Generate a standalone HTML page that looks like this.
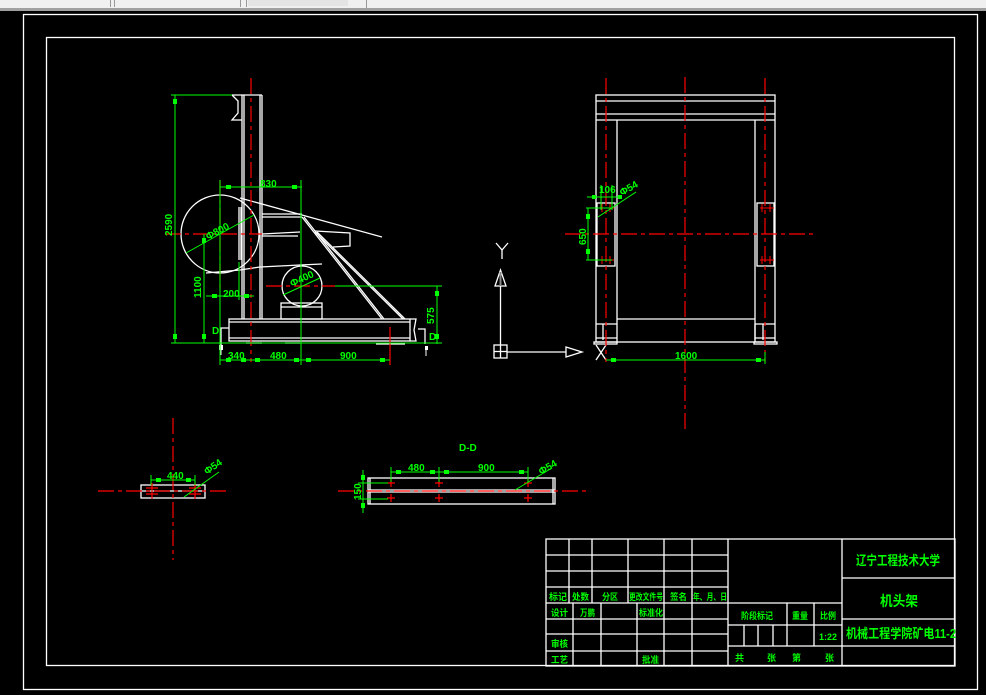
<!DOCTYPE html>
<html><head><meta charset="utf-8"><style>
html,body{margin:0;padding:0;background:#000;width:986px;height:695px;overflow:hidden}
svg{display:block}
.w{stroke:#fff;fill:none;stroke-width:1.3}
.g{stroke:#00ff00;fill:none;stroke-width:1}
.r{stroke:#ff0000;fill:none;stroke-width:1.2;stroke-dasharray:16 4 4 4}
.t{fill:#00ff00;font-family:"Liberation Sans",sans-serif;font-size:10px;font-weight:bold}
.c{fill:#00ff00;font-family:"Liberation Sans","Noto Sans CJK SC",sans-serif;font-weight:bold}
</style></head><body>
<svg width="986" height="695" viewBox="0 0 986 695" xmlns="http://www.w3.org/2000/svg">
<rect x="0" y="0" width="986" height="695" fill="#000"/>
<rect x="0" y="0" width="986" height="8" fill="#f0f0f0"/>
<rect x="0" y="8" width="986" height="3" fill="#a0a0a0"/>
<rect x="110" y="0" width="1" height="7" fill="#999"/><rect x="114" y="0" width="1" height="7" fill="#999"/>
<rect x="240" y="0" width="1" height="7" fill="#999"/><rect x="246" y="0" width="1" height="7" fill="#999"/>
<rect x="248" y="0" width="100" height="6" fill="#e4e4e4"/>
<rect x="366" y="0" width="1" height="8" fill="#999"/>
<rect x="23.5" y="14.5" width="954" height="675" class="w"/>
<rect x="46.5" y="37.5" width="908" height="628" class="w"/>

<g class="w">
<line x1="242" y1="95" x2="242" y2="319"/><line x1="244" y1="95" x2="244" y2="319"/>
<line x1="260" y1="95" x2="260" y2="319"/><line x1="262" y1="95" x2="262" y2="319"/>
<line x1="232" y1="95" x2="262" y2="95"/>
<polyline points="232,95 238,101 238,113 232,120 242,120"/>
<circle cx="220" cy="234" r="39"/>
<circle cx="302" cy="286" r="20"/>
<rect x="229" y="319" width="181" height="22"/>
<line x1="229" y1="322" x2="410" y2="322"/>
<line x1="229" y1="338" x2="410" y2="338"/>
<polyline points="410,319 416,319 414,330 416,341 410,341"/>
<rect x="281" y="303" width="41" height="16"/>
<line x1="281" y1="307" x2="322" y2="307"/>
<line x1="302" y1="217" x2="382" y2="319"/><line x1="304" y1="217" x2="384" y2="319"/>
<line x1="315" y1="232" x2="403" y2="319"/><line x1="317" y1="232" x2="405" y2="319"/>
<line x1="240" y1="198" x2="382" y2="237"/>
<line x1="262" y1="217" x2="302" y2="217"/><line x1="262" y1="214" x2="302" y2="214"/>
<line x1="262" y1="236" x2="298" y2="236"/><line x1="262" y1="234" x2="300" y2="232"/>
<polyline points="315,231 350,233 350,246 333,247"/>
<polyline points="206,273 240,270 260,267 300,265 322,264"/>
<line x1="239" y1="207" x2="239" y2="260"/><line x1="241" y1="207" x2="241" y2="260"/>
<polyline points="229,328 221,328 221,347"/>
<polyline points="418,329 425,329 425,344"/>
<line x1="246" y1="343" x2="262" y2="343"/><line x1="285" y1="343" x2="300" y2="343"/><line x1="376" y1="344" x2="405" y2="344"/>
</g>
<rect x="219" y="345" width="4" height="5" fill="#fff"/>
<line x1="221" y1="350" x2="221" y2="355" stroke="#fff"/>
<rect x="425" y="346" width="3" height="4" fill="#fff"/>
<line x1="426" y1="350" x2="426" y2="356" stroke="#fff"/>
<line x1="251" y1="78" x2="251" y2="362" class="r"/>
<line x1="165" y1="234" x2="262" y2="234" class="r"/>
<line x1="220" y1="180" x2="220" y2="290" class="r"/>
<line x1="266" y1="286" x2="335" y2="286" class="r"/>
<line x1="390" y1="327" x2="390" y2="365" class="r" style="stroke-dasharray:none"/>
<g class="g">
<line x1="175" y1="95" x2="175" y2="343"/>
<line x1="171" y1="95" x2="232" y2="95"/>
<line x1="171" y1="343" x2="442" y2="343"/>
<line x1="220" y1="187" x2="302" y2="187"/>
<line x1="220" y1="180" x2="220" y2="365"/>
<line x1="301" y1="180" x2="301" y2="365"/>
<line x1="204" y1="234" x2="204" y2="343"/>
<line x1="206" y1="296" x2="254" y2="296"/>
<line x1="239" y1="262" x2="239" y2="300"/>
<line x1="437" y1="286" x2="437" y2="344"/>
<line x1="335" y1="286" x2="442" y2="286"/>
<line x1="220" y1="360" x2="390" y2="360"/>
<line x1="186" y1="253" x2="254" y2="215"/>
<line x1="283" y1="295" x2="320" y2="278"/>
</g>
<g fill="#00ff00">
<rect x="173" y="99" width="4" height="5"/><rect x="173" y="334" width="4" height="5"/>
<rect x="226" y="185" width="5" height="4"/><rect x="292" y="185" width="5" height="4"/>
<rect x="202" y="238" width="4" height="5"/><rect x="202" y="334" width="4" height="5"/>
<rect x="212" y="294" width="5" height="4"/><rect x="244" y="294" width="5" height="4"/>
<rect x="435" y="291" width="4" height="5"/><rect x="435" y="334" width="4" height="5"/>
<rect x="226" y="358" width="5" height="4"/><rect x="241" y="358" width="5" height="4"/><rect x="255" y="358" width="5" height="4"/><rect x="294" y="358" width="5" height="4"/><rect x="306" y="358" width="5" height="4"/><rect x="380" y="358" width="5" height="4"/>
</g>
<text class="t" x="260" y="187">830</text>
<text class="t" x="223" y="297">200</text>
<text class="t" x="228" y="359">340</text>
<text class="t" x="270" y="359">480</text>
<text class="t" x="340" y="359">900</text>
<text class="t" transform="translate(172,236) rotate(-90)">2590</text>
<text class="t" transform="translate(201,298) rotate(-90)">1100</text>
<text class="t" transform="translate(434,324) rotate(-90)">575</text>
<text class="t" transform="translate(208,240) rotate(-28)">Φ800</text>
<text class="t" transform="translate(292,287) rotate(-25)">Φ400</text>
<text class="t" x="212" y="334">D</text>
<text class="t" x="429" y="340">D</text>

<g class="w" stroke-width="1">
<rect x="494" y="345" width="13" height="13"/>
<line x1="500.5" y1="345" x2="500.5" y2="358"/><line x1="494" y1="351.5" x2="507" y2="351.5"/>
<line x1="500.5" y1="345" x2="500.5" y2="286"/>
<polygon points="500.5,270 495,286 506,286"/>
<line x1="507" y1="352" x2="566" y2="352"/>
<polygon points="582,352 566,347 566,357"/>
<polyline points="496,243 502,250 508,243"/><line x1="502" y1="250" x2="502" y2="259"/>
<line x1="596" y1="345" x2="606" y2="360"/><line x1="606" y1="345" x2="596" y2="360"/>
</g>
<line x1="500.5" y1="272" x2="500.5" y2="286" stroke="#888" stroke-width="2"/>

<g class="w">
<rect x="596" y="95" width="179" height="247"/>
<line x1="596" y1="101" x2="775" y2="101"/>
<line x1="596" y1="114" x2="775" y2="114"/>
<line x1="596" y1="120" x2="775" y2="120"/>
<line x1="617" y1="120" x2="617" y2="342"/>
<line x1="755" y1="120" x2="755" y2="342"/>
<line x1="617" y1="319" x2="755" y2="319"/>
<rect x="597" y="203" width="18" height="63"/>
<rect x="757" y="203" width="17" height="63"/>
<line x1="596" y1="324" x2="617" y2="324"/><line x1="755" y1="324" x2="775" y2="324"/>
<line x1="603" y1="324" x2="603" y2="340"/><line x1="755" y1="324" x2="755" y2="340"/><line x1="763" y1="324" x2="763" y2="340"/>
<line x1="596" y1="338" x2="617" y2="338"/><line x1="755" y1="338" x2="775" y2="338"/>
<rect x="594" y="342" width="23" height="2"/><rect x="754" y="342" width="23" height="2"/>
</g>
<line x1="606" y1="78" x2="606" y2="362" class="r"/>
<line x1="765" y1="78" x2="765" y2="362" class="r"/>
<line x1="685" y1="77" x2="685" y2="432" class="r"/>
<line x1="565" y1="234" x2="816" y2="234" class="r"/>
<g stroke="#ff0000" stroke-width="1">
<path d="M600 208h8M602 204v8M606 208h8M610 204v8M600 260h8M602 256v8M606 260h8M610 256v8M760 208h8M762 204v8M766 208h8M770 204v8M760 260h8M762 256v8M766 260h8M770 256v8"/>
</g>
<g class="g">
<line x1="606" y1="360" x2="765" y2="360"/>
<line x1="765" y1="352" x2="765" y2="364"/>
<line x1="586" y1="208" x2="612" y2="208"/><line x1="586" y1="260" x2="612" y2="260"/>
<line x1="588" y1="208" x2="588" y2="260"/>
<line x1="587" y1="197" x2="620" y2="197"/>
<line x1="601" y1="185" x2="601" y2="210"/><line x1="612" y1="185" x2="612" y2="210"/>
<line x1="598" y1="217" x2="636" y2="192"/>
</g>
<g fill="#00ff00"><rect x="611" y="358" width="5" height="4"/><rect x="756" y="358" width="5" height="4"/><rect x="586" y="214" width="4" height="5"/><rect x="586" y="249" width="4" height="5"/><rect x="592" y="195" width="4" height="4"/><rect x="618" y="195" width="4" height="4"/></g>
<text class="t" x="675" y="359">1600</text>
<text class="t" x="599" y="193">106</text>
<text class="t" transform="translate(586,245) rotate(-90)">650</text>
<text class="t" transform="translate(622,196) rotate(-30)">Φ54</text>

<g class="w">
<rect x="141" y="485" width="64" height="13"/>
<line x1="141" y1="491" x2="205" y2="491"/>
<rect x="368" y="478" width="187" height="26"/>
<line x1="370" y1="478" x2="370" y2="504"/><line x1="553" y1="478" x2="553" y2="504"/>
<line x1="368" y1="490" x2="555" y2="490"/><line x1="368" y1="492" x2="555" y2="492"/>
</g>
<line x1="98" y1="491" x2="226" y2="491" class="r"/>
<line x1="173" y1="418" x2="173" y2="560" class="r"/>
<line x1="338" y1="491" x2="590" y2="491" class="r"/>
<g stroke="#ff0000" stroke-width="1.2">
<path d="M146 488h12M152 483v10M146 494h12M152 489v10M189 488h12M195 483v10M189 494h12M195 489v10"/>
<path d="M387 483h8M391 479v8M387 498h8M391 494v8M435 483h8M439 479v8M435 498h8M439 494v8M524 483h8M528 479v8M524 498h8M528 494v8"/>
</g>
<g class="g">
<line x1="151" y1="480" x2="195" y2="480"/><line x1="151" y1="475" x2="151" y2="485"/><line x1="195" y1="475" x2="195" y2="485"/>
<line x1="184" y1="497" x2="219" y2="472"/>
<line x1="391" y1="472" x2="528" y2="472"/>
<line x1="391" y1="467" x2="391" y2="482"/><line x1="439" y1="467" x2="439" y2="482"/><line x1="528" y1="467" x2="528" y2="482"/>
<line x1="515" y1="490" x2="552" y2="468"/>
<line x1="363" y1="470" x2="363" y2="513"/>
<line x1="358" y1="483" x2="388" y2="483"/><line x1="358" y1="499" x2="388" y2="499"/>
</g>
<g fill="#00ff00"><rect x="156" y="478" width="5" height="4"/><rect x="186" y="478" width="5" height="4"/><rect x="396" y="470" width="5" height="4"/><rect x="430" y="470" width="5" height="4"/><rect x="444" y="470" width="5" height="4"/><rect x="519" y="470" width="5" height="4"/><rect x="361" y="475" width="4" height="5"/><rect x="361" y="503" width="4" height="5"/></g>
<text class="t" x="167" y="479">440</text>
<text class="t" x="408" y="471">480</text>
<text class="t" x="478" y="471">900</text>
<text class="t" x="459" y="451">D-D</text>
<text class="t" transform="translate(361,500) rotate(-90)">150</text>
<text class="t" transform="translate(207,475) rotate(-35)">Φ54</text>
<text class="t" transform="translate(541,475) rotate(-30)">Φ54</text>

<g stroke="#fff" stroke-width="1.3" fill="none">
<rect x="546" y="539" width="409" height="127"/>
<line x1="546" y1="555" x2="728" y2="555"/><line x1="546" y1="571" x2="728" y2="571"/>
<line x1="546" y1="587" x2="728" y2="587"/><line x1="546" y1="603" x2="728" y2="603"/>
<line x1="546" y1="619" x2="728" y2="619"/><line x1="546" y1="634" x2="728" y2="634"/>
<line x1="546" y1="651" x2="728" y2="651"/>
<line x1="569" y1="539" x2="569" y2="603"/><line x1="592" y1="539" x2="592" y2="603"/>
<line x1="628" y1="539" x2="628" y2="603"/><line x1="664" y1="539" x2="664" y2="666"/>
<line x1="692" y1="539" x2="692" y2="666"/><line x1="728" y1="539" x2="728" y2="666"/>
<line x1="573" y1="603" x2="573" y2="666"/><line x1="601" y1="603" x2="601" y2="666"/><line x1="637" y1="603" x2="637" y2="666"/>
<line x1="728" y1="603" x2="842" y2="603"/><line x1="728" y1="625" x2="842" y2="625"/><line x1="728" y1="646" x2="842" y2="646"/>
<line x1="787" y1="603" x2="787" y2="646"/><line x1="814" y1="603" x2="814" y2="646"/>
<line x1="744" y1="625" x2="744" y2="646"/><line x1="758" y1="625" x2="758" y2="646"/><line x1="773" y1="625" x2="773" y2="646"/>
<line x1="842" y1="539" x2="842" y2="666"/>
<line x1="842" y1="578" x2="955" y2="578"/><line x1="842" y1="619" x2="955" y2="619"/><line x1="842" y1="646" x2="955" y2="646"/>
</g>
<g class="c" font-size="9" lengthAdjust="spacingAndGlyphs">
<text x="549" y="600" textLength="18" lengthAdjust="spacingAndGlyphs">标记</text>
<text x="572" y="600" textLength="17" lengthAdjust="spacingAndGlyphs">处数</text>
<text x="602" y="600" textLength="16" lengthAdjust="spacingAndGlyphs">分区</text>
<text x="629" y="600" textLength="34" lengthAdjust="spacingAndGlyphs">更改文件号</text>
<text x="670" y="600" textLength="17" lengthAdjust="spacingAndGlyphs">签名</text>
<text x="693" y="600" textLength="34" lengthAdjust="spacingAndGlyphs">年、月、日</text>
<text x="551" y="616" textLength="17" lengthAdjust="spacingAndGlyphs">设计</text>
<text x="580" y="616" textLength="15" lengthAdjust="spacingAndGlyphs">万鹏</text>
<text x="639" y="616" textLength="24" lengthAdjust="spacingAndGlyphs">标准化</text>
<text x="551" y="647" textLength="17" lengthAdjust="spacingAndGlyphs">审核</text>
<text x="551" y="663" textLength="17" lengthAdjust="spacingAndGlyphs">工艺</text>
<text x="642" y="663" textLength="17" lengthAdjust="spacingAndGlyphs">批准</text>
<text x="741" y="619" textLength="32" lengthAdjust="spacingAndGlyphs">阶段标记</text>
<text x="792" y="619" textLength="16" lengthAdjust="spacingAndGlyphs">重量</text>
<text x="820" y="619" textLength="16" lengthAdjust="spacingAndGlyphs">比例</text>
<text x="819" y="640" textLength="18" lengthAdjust="spacingAndGlyphs">1:22</text>
<text x="735" y="661">共</text><text x="767" y="661">张</text><text x="792" y="661">第</text><text x="825" y="661">张</text>
</g>
<g class="c">
<text x="856" y="565" font-size="13" textLength="84" lengthAdjust="spacingAndGlyphs">辽宁工程技术大学</text>
<text x="880" y="606" font-size="14" textLength="38" lengthAdjust="spacingAndGlyphs">机头架</text>
<text x="846" y="638" font-size="13" textLength="110" lengthAdjust="spacingAndGlyphs">机械工程学院矿电11-2</text>
</g>
</svg>
</body></html>
